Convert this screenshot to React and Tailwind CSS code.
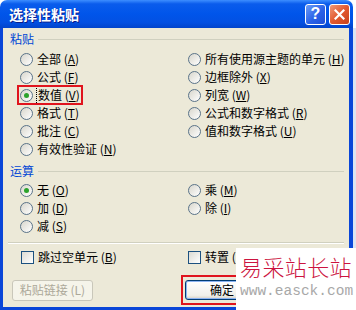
const font = "font-['Noto_Sans_CJK_SC','Noto_Sans',sans-serif]";

function Radio({ checked }) {
  return (
    <span className="w-[13px] h-[13px] shrink-0 rounded-full border border-[#5A7389] bg-gradient-to-br from-[#D8D6CC] to-white flex items-center justify-center">
      {checked && <span className="w-[5px] h-[5px] rounded-full bg-[#2BA32B]" />}
    </span>
  );
}

function Check() {
  return (
    <span className="w-[13px] h-[13px] shrink-0 border border-[#1C5180] bg-gradient-to-br from-[#DCDBD3] to-white" />
  );
}

function Label({ text, k }) {
  return (
    <span className="leading-none whitespace-nowrap">
      {text} (<span className="underline">{k}</span>)
    </span>
  );
}

function Row({ text, k, checked, box }) {
  return (
    <div className="h-[18px] flex items-center gap-[4px] relative">
      {box && (
        <div className="absolute left-[-3px] top-[-1px] w-[66px] h-[20px] border-2 border-[#E0141E]" />
      )}
      <Radio checked={checked} />
      <span className={box ? "outline outline-1 outline-dotted outline-black px-[1px]" : ""}>
        <Label text={text} k={k} />
      </span>
    </div>
  );
}

function GroupLabel({ children }) {
  return (
    <div className="h-[14px] flex items-center pl-[7px] pr-[5px] gap-[4px]">
      <span className="text-[#0046D5] leading-none">{children}</span>
      <div className="flex-1 border-t border-[#D0D0BF]" />
    </div>
  );
}

export default function App() {
  return (
    <div className={`w-[356px] h-[310px] relative overflow-hidden bg-white text-[12px] text-black ${font}`}>
      <div className="w-[353px] h-[310px] flex flex-col">
        {/* Title bar */}
        <div className="h-[28px] rounded-t-[7px] bg-[linear-gradient(to_bottom,#3D8EFF_0%,#0A5CEC_14%,#0055EA_50%,#0350E2_80%,#0244CB_100%)] flex items-center pl-[9px] pr-[3px]">
          <span className="flex-1 text-white font-bold text-[14px] leading-none [text-shadow:1px_1px_0_#0A1E8C]">
            选择性粘贴
          </span>
          <div className="flex gap-[3px]">
            <div className="w-[21px] h-[21px] rounded-[3px] border border-white bg-[linear-gradient(135deg,#6C9CF6,#2A62E8_55%,#1E4FD6)] flex items-center justify-center text-white font-bold text-[16px] leading-none font-['Liberation_Sans',sans-serif]">
              ?
            </div>
            <div className="w-[21px] h-[21px] rounded-[3px] border border-white bg-[linear-gradient(135deg,#F09A7A,#E2592F_50%,#C8421C)] flex items-center justify-center">
              <svg width="11" height="11" viewBox="0 0 11 11">
                <path d="M1.5 1.5 L9.5 9.5 M9.5 1.5 L1.5 9.5" stroke="white" strokeWidth="2.2" strokeLinecap="square" />
              </svg>
            </div>
          </div>
        </div>

        {/* Body */}
        <div className="flex-1 bg-[#ECE9D8] border-l-[3px] border-r-[4px] border-b-[3px] border-[#0A46D8] flex flex-col pt-[4px]">
          <GroupLabel>粘贴</GroupLabel>
          <div className="mt-[4px] flex">
            <div className="w-[185px] pl-[17px] flex flex-col">
              <Row text="全部" k="A" />
              <Row text="公式" k="F" />
              <Row text="数值" k="V" checked box />
              <Row text="格式" k="T" />
              <Row text="批注" k="C" />
              <Row text="有效性验证" k="N" />
            </div>
            <div className="flex flex-col">
              <Row text="所有使用源主题的单元" k="H" />
              <Row text="边框除外" k="X" />
              <Row text="列宽" k="W" />
              <Row text="公式和数字格式" k="R" />
              <Row text="值和数字格式" k="U" />
            </div>
          </div>

          <div className="mt-[6px]">
            <GroupLabel>运算</GroupLabel>
          </div>
          <div className="mt-[3px] flex">
            <div className="w-[185px] pl-[17px] flex flex-col">
              <Row text="无" k="O" checked />
              <Row text="加" k="D" />
              <Row text="减" k="S" />
            </div>
            <div className="flex flex-col">
              <Row text="乘" k="M" />
              <Row text="除" k="I" />
            </div>
          </div>

          <div className="mt-[7px] mx-[5px] border-t border-b border-t-[#D0D0BF] border-b-white" />

          <div className="mt-[4px] h-[18px] flex items-center">
            <div className="w-[185px] pl-[18px] flex items-center gap-[4px]">
              <Check />
              <Label text="跳过空单元" k="B" />
            </div>
            <div className="flex items-center gap-[4px]">
              <Check />
              {/* the rest of this label sits under the watermark */}
              <span className="w-[31px] overflow-hidden">
                <Label text="转置" k="E" />
              </span>
            </div>
          </div>

          <div className="mt-[9px] flex items-center">
            <div className="ml-[9px] w-[81px] h-[21px] rounded-[3px] border border-[#C9C7BA] bg-[#F5F4EA] flex items-center justify-center text-[#ACA899] leading-none">
              粘贴链接 (L)
            </div>
            <div className="ml-[88px] border-2 border-[#E0141E] pl-[2px] pr-[3px] pt-[3px] pb-[3px]">
              <div className="w-[75px] h-[20px] rounded-[3px] border border-[#003C74] bg-[linear-gradient(to_bottom,#FFFFFF,#F0F0EA_80%,#D6D0C5)] shadow-[inset_0_0_0_1px_#8CB4F2] flex items-center justify-start pl-[24px] leading-none">
                确定
              </div>
            </div>
          </div>
        </div>
      </div>

      {/* right edge of the sheet behind */}
      <div className="absolute left-[353px] top-[28px] w-[3px] h-[282px] bg-[#DDE4F2]" />

      {/* watermark */}
      <div className="absolute left-[236px] top-[248px] w-[120px] h-[62px] bg-white flex flex-col pl-[4px]">
        <span className="mt-[5px] text-[22px] font-light leading-[26px] tracking-[0.4px] text-[#CC1440] whitespace-nowrap">
          易采站长站
        </span>
        <span className="mt-[4px] font-['Liberation_Mono',monospace] text-[14.5px] leading-[16px] text-[#A8A8A8] whitespace-nowrap">
          www.easck.com
        </span>
      </div>
    </div>
  );
}
